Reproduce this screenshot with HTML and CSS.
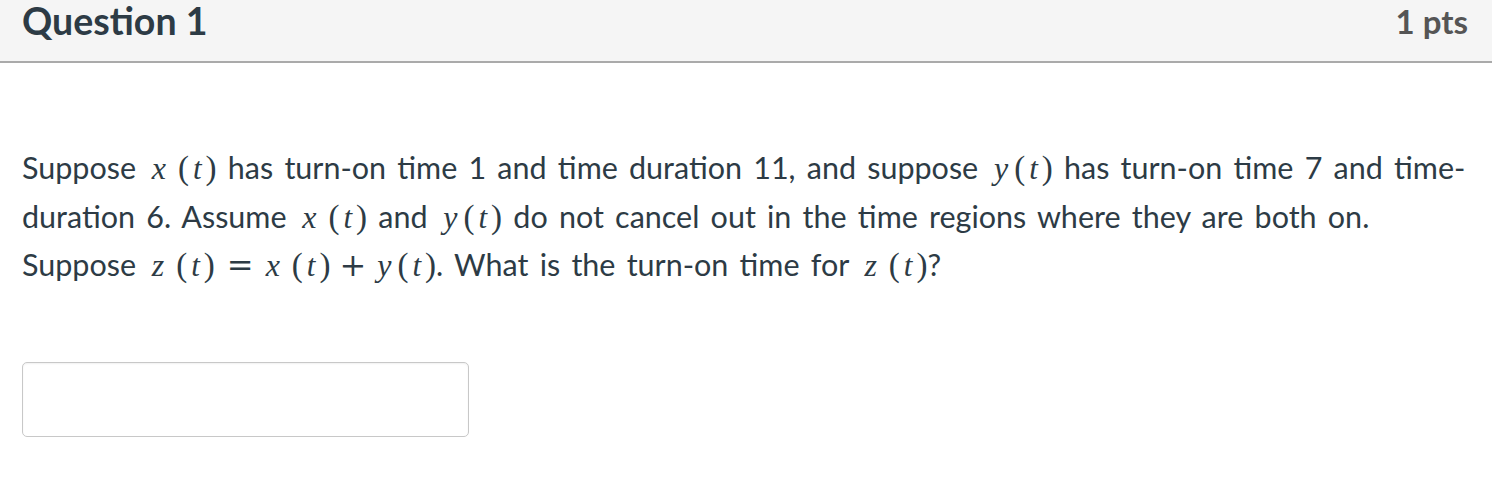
FILE: index.html
```html
<!DOCTYPE html>
<html>
<head>
<meta charset="utf-8">
<link rel="stylesheet" href="styles.css">
</head>
<body>
<div class="question">
  <div class="header">
    <span class="title">Question 1</span>
    <span class="pts">1 pts</span>
  </div>
  <div class="content">
    <p class="text">Suppose <span class="m"><i class="v">x</i><span class="p">(<i>t</i>)</span></span> has turn-on time 1 and time duration 11, and suppose <span class="m"><i class="v">y</i><span class="p py">(<i>t</i>)</span></span> has turn-on time 7 and time-duration 6. Assume <span class="m"><i class="v">x</i><span class="p">(<i>t</i>)</span></span> and <span class="m"><i class="v">y</i><span class="p py">(<i>t</i>)</span></span> do not cancel out in the time regions where they are both on. Suppose <span class="m"><i class="v">z</i><span class="p">(<i>t</i>)</span><span class="op">=</span><i class="v">x</i><span class="p">(<i>t</i>)</span><span class="op op-plus">+</span><i class="v">y</i><span class="p py">(<i>t</i>)</span></span>. What is the turn-on time for <span class="m"><i class="v">z</i><span class="p">(<i>t</i>)</span></span>?</p>
    <div class="answer"><input class="box" type="text"></div>
  </div>
</div>
</body>
</html>
```

FILE: styles.css
```css
html, body {
  margin: 0;
  padding: 0;
  background: #fff;
}
body {
  font-family: Lato, "Liberation Sans", sans-serif;
  color: #2d3b45;
}
.header {
  display: flex;
  justify-content: space-between;
  align-items: flex-start;
  background: #f5f5f5;
  border-bottom: 2px solid #aaaaaa;
  height: 61px;
  padding: 0 24px 0 22px;
  box-sizing: content-box;
}
.title {
  font-weight: 700;
  font-size: 37.5px;
  line-height: 42px;
  color: #2d3b45;
}
.pts {
  font-weight: 700;
  font-size: 33px;
  line-height: 42px;
  color: #555555;
}
.content {
  padding: 80px 0 0 22px;
}
.text {
  margin: 0;
  font-size: 30.5px;
  line-height: 48.5px;
  word-spacing: 3.4px;
}
.m {
  font-family: "Liberation Serif", "Times New Roman", serif;
  font-size: 33px;
  line-height: 1;
  word-spacing: 0;
  margin-left: 4.5px;
}
.m i {
  font-style: italic;
}
.v {
  font-size: 32px;
}
.p {
  margin-left: 12px;
}
.p.py {
  margin-left: 6px;
}
.p i {
  font-size: 31px;
  margin: 0 4px 0 4px;
}
.op {
  font-family: "DejaVu Serif", serif;
  font-size: 32px;
  margin: 0 12px;
}
.op-plus {
  margin: 0 11px 0 9px;
}
.answer {
  margin-top: 73px;
}
.box {
  display: block;
  width: 447px;
  height: 75px;
  box-sizing: border-box;
  border: 1px solid #c8c8c8;
  border-radius: 5px;
  margin: 0;
  padding: 0;
  background: #fff;
  box-shadow: inset 0 1px 2px rgba(0,0,0,0.06);
}
```
